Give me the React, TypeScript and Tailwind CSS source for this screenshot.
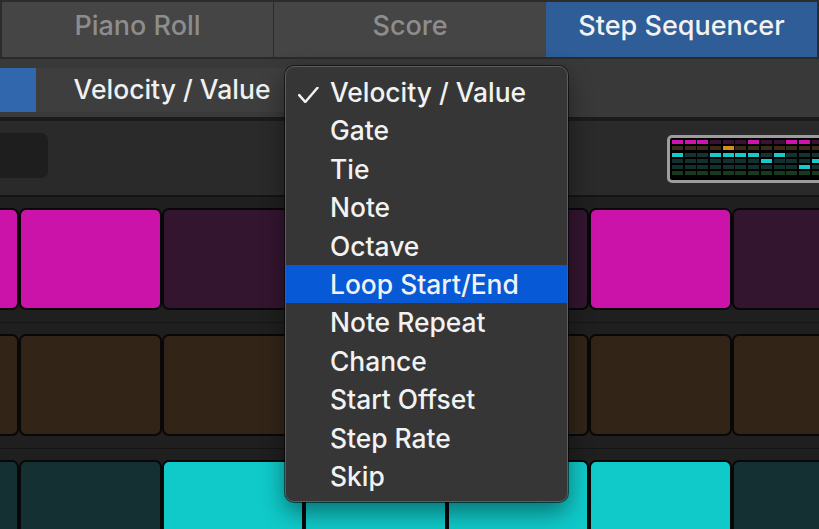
import React from 'react'

const font = "font-['Inter','Liberation_Sans',Arial,sans-serif]"

const menuItems = [
  'Velocity / Value',
  'Gate',
  'Tie',
  'Note',
  'Octave',
  'Loop Start/End',
  'Note Repeat',
  'Chance',
  'Start Offset',
  'Step Rate',
  'Skip',
]

// pad colours, first column starts off-screen on the left
const padRows = [
  ['bg-[#cb12a9]', 'bg-[#cb12a9]', 'bg-[#331530]', 'bg-[#331530]', 'bg-[#331530]', 'bg-[#cb12a9]', 'bg-[#331530]'],
  ['bg-[#322518]', 'bg-[#322518]', 'bg-[#322518]', 'bg-[#322518]', 'bg-[#322518]', 'bg-[#322518]', 'bg-[#322518]'],
  ['bg-[#153032]', 'bg-[#153032]', 'bg-[#10caca]', 'bg-[#10caca]', 'bg-[#10caca]', 'bg-[#10caca]', 'bg-[#153032]'],
]

const thumbColors: Record<string, string> = {
  M: 'bg-[#d112b2]',
  m: 'bg-[#3a1235]',
  b: 'bg-[#3a2a17]',
  O: 'bg-[#d98b17]',
  C: 'bg-[#14caca]',
  c: 'bg-[#143434]',
  t: 'bg-[#123030]',
  g: 'bg-[#173a1f]',
}

const thumbRows = [
  'MMMmmmMmmMMmm',
  'bbbbObbbbbbbb',
  'CccCCCCcCcccc',
  'tttttttCtttCt',
  'ttttttttttCtt',
  'ggggggggggggg',
]

function CheckMark() {
  return (
    <svg width="21" height="16" viewBox="0 0 21 16" fill="none">
      <path d="M1.2 8.2 L7.3 15 L19.5 0.8" stroke="#f2f2f2" strokeWidth="2.5" strokeLinecap="round" strokeLinejoin="round" />
    </svg>
  )
}

function Thumbnail() {
  return (
    <div className="mt-[14px] ml-auto mr-[-30px] w-[182px] h-[48px] shrink-0 rounded-[5px] border-[3px] border-[#9d9d9d] bg-black pl-[2px] pt-[2px] flex flex-col gap-[2.3px]">
      {thumbRows.map((row, r) => (
        <div key={r} className="flex gap-[1.7px]">
          {row.split('').map((c, i) => (
            <div key={i} className={`w-[11px] h-[4px] shrink-0 ${thumbColors[c]}`} />
          ))}
        </div>
      ))}
    </div>
  )
}

export default function App() {
  return (
    <div className={`relative w-[819px] h-[529px] overflow-hidden bg-[#1f1f1f] ${font}`}>
      {/* Tabs */}
      <div className="flex h-[57px] bg-[#2c2c2c] pt-[2px] pl-[2px] pr-[2px]">
        <div className="w-[271px] flex items-center justify-center pb-[6px] bg-[#454545] text-[27px] font-medium text-[#8d8d8d]">Piano Roll</div>
        <div className="w-px bg-[#2c2c2c]" />
        <div className="w-[272px] flex items-center justify-center pb-[6px] bg-[#454545] text-[27px] font-medium text-[#8d8d8d]">Score</div>
        <div className="flex-1 flex items-center justify-center pb-[6px] bg-[#2e5d97] text-[27px] font-medium text-[#f2f2f2]">Step Sequencer</div>
      </div>

      {/* Toolbar */}
      <div className="h-[64px] border-t-2 border-[#2a2a2a] border-b-4 border-b-[#1b1b1b] bg-[#393939] pt-[9px]">
        <div className="flex h-[44px]">
          <div className="w-[36px] bg-[#3067ad]" />
          <div className="w-[272px] flex items-center justify-center bg-[#3e3e3e] text-[26.5px] font-medium text-[#f0f0f0]">
            Velocity / Value
          </div>
        </div>
      </div>

      {/* Control strip */}
      <div className="flex items-start h-[76px] bg-[#2a2a2a] border-b-2 border-[#141414]">
        <div className="mt-[12px] ml-[-12px] w-[60px] h-[45px] rounded-[7px] bg-[#1e1e1e]" />
        <Thumbnail />
      </div>

      {/* Step grid */}
      <div>
        {padRows.map((row, r) => (
          <div key={r} className="pt-[11px] pb-[12px] border-b border-[#161616] bg-[#1f1f1f]">
            <div className="flex ml-[-123.6px]">
              {row.map((c, i) => (
                <div key={i} className={`w-[142.6px] h-[102px] shrink-0 rounded-[7px] border-2 border-[#080808] ${c}`} />
              ))}
            </div>
          </div>
        ))}
      </div>

      {/* Dropdown menu */}
      <div className="absolute left-[285px] top-[66px] w-[283px] rounded-[9px] border border-[#5c5c5c] bg-[#363636] py-[6px] shadow-[0_0_0_1px_rgba(0,0,0,0.55),0_10px_24px_rgba(0,0,0,0.45)]">
        {menuItems.map((item, i) => (
          <div
            key={item}
            className={`flex items-center h-[38.4px] pl-[12px] text-[26.4px] font-medium text-[#f2f2f2] ${i === 5 ? 'bg-[#0759d6]' : ''}`}
          >
            <div className="w-[21px] h-[16px] mr-[11px] mt-[5px] flex items-center">
              {i === 0 && <CheckMark />}
            </div>
            <span className="leading-none">{item}</span>
          </div>
        ))}
      </div>
    </div>
  )
}
